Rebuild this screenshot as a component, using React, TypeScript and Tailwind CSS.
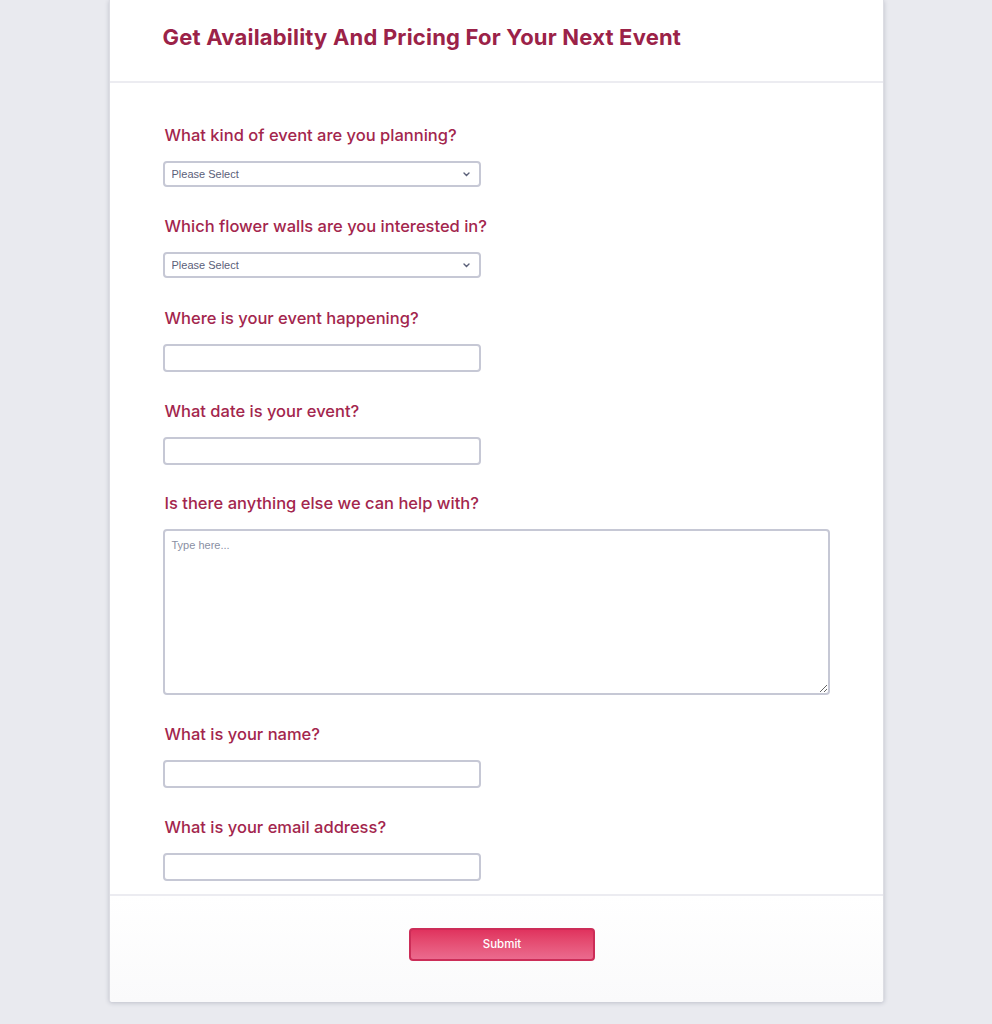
import React from 'react';

const inter = { fontFamily: 'Inter, "Noto Sans", sans-serif' };

function Label({ children }: { children: React.ReactNode }) {
  return (
    <label className="block h-[20px] pl-[2px] text-[16.5px] leading-[20px] font-medium text-[#a3264d] mb-4">
      {children}
    </label>
  );
}

function SelectBox() {
  return (
    <div className="relative w-[318px]">
      <select
        defaultValue=""
        className="block w-full h-[26px] appearance-none rounded-[4px] border-2 border-[#c6c8d5] bg-white pl-[7px] pr-6 text-[11px] text-[#5b6079] font-['Liberation_Sans',Arial,sans-serif] outline-none"
      >
        <option value="">Please Select</option>
      </select>
      <svg
        className="pointer-events-none absolute right-[11px] top-[11px]"
        width="7"
        height="5"
        viewBox="0 0 7 5"
        fill="none"
      >
        <path d="M1 1l2.5 2.5L6 1" stroke="#5b6079" strokeWidth="1.4" strokeLinecap="round" />
      </svg>
    </div>
  );
}

function TextInput() {
  return (
    <input
      type="text"
      className="block w-[318px] h-[28px] rounded-[4px] border-2 border-[#c6c8d5] bg-white px-2 text-[12px] outline-none"
    />
  );
}

export default function App() {
  return (
    <div className="min-h-screen bg-[#e9eaef]" style={inter}>
      <div className="mx-auto w-[775px] bg-white rounded-b-[3px] shadow-[0_1px_4px_rgba(60,65,90,0.25)] border-x border-[#dcdde3]">
        {/* Header */}
        <div className="h-[83px] border-b-2 border-[#ececf1] px-[53px] pt-[22px]">
          <h1 className="text-[22px] leading-[30px] font-bold text-[#9b2248] tracking-[0.2px]">
            Get Availability And Pricing For Your Next Event
          </h1>
        </div>

        {/* Fields */}
        <div className="px-[53px] pt-[42px] pb-[13px] border-b-2 border-[#ececf1]">
          <div className="mb-[29px]">
            <Label>What kind of event are you planning?</Label>
            <SelectBox />
          </div>
          <div className="mb-[30px]">
            <Label>Which flower walls are you interested in?</Label>
            <SelectBox />
          </div>
          <div className="mb-[29px]">
            <Label>Where is your event happening?</Label>
            <TextInput />
          </div>
          <div className="mb-[28px]">
            <Label>What date is your event?</Label>
            <TextInput />
          </div>
          <div className="mb-[29px]">
            <Label>Is there anything else we can help with?</Label>
            <textarea
              placeholder="Type here..."
              className="block w-[667px] h-[166px] rounded-[4px] border-2 border-[#c6c8d5] bg-white px-[7px] py-[6px] text-[11px] text-[#5b6079] placeholder:text-[#8a8fa3] font-['Liberation_Sans',Arial,sans-serif] outline-none"
            />
          </div>
          <div className="mb-[29px]">
            <Label>What is your name?</Label>
            <TextInput />
          </div>
          <div>
            <Label>What is your email address?</Label>
            <TextInput />
          </div>
        </div>

        {/* Footer */}
        <div className="flex justify-center pl-[12px] pt-[32px] pb-[41px] bg-gradient-to-b from-white to-[#fafafb] rounded-b-[3px]">
          <button
            type="button"
            className="w-[186px] h-[33px] rounded-[4px] border-2 border-[#cc2d58] bg-gradient-to-b from-[#e0325e] to-[#eb6a8e] text-white text-[11.5px] font-medium"
          >
            Submit
          </button>
        </div>
      </div>
    </div>
  );
}
